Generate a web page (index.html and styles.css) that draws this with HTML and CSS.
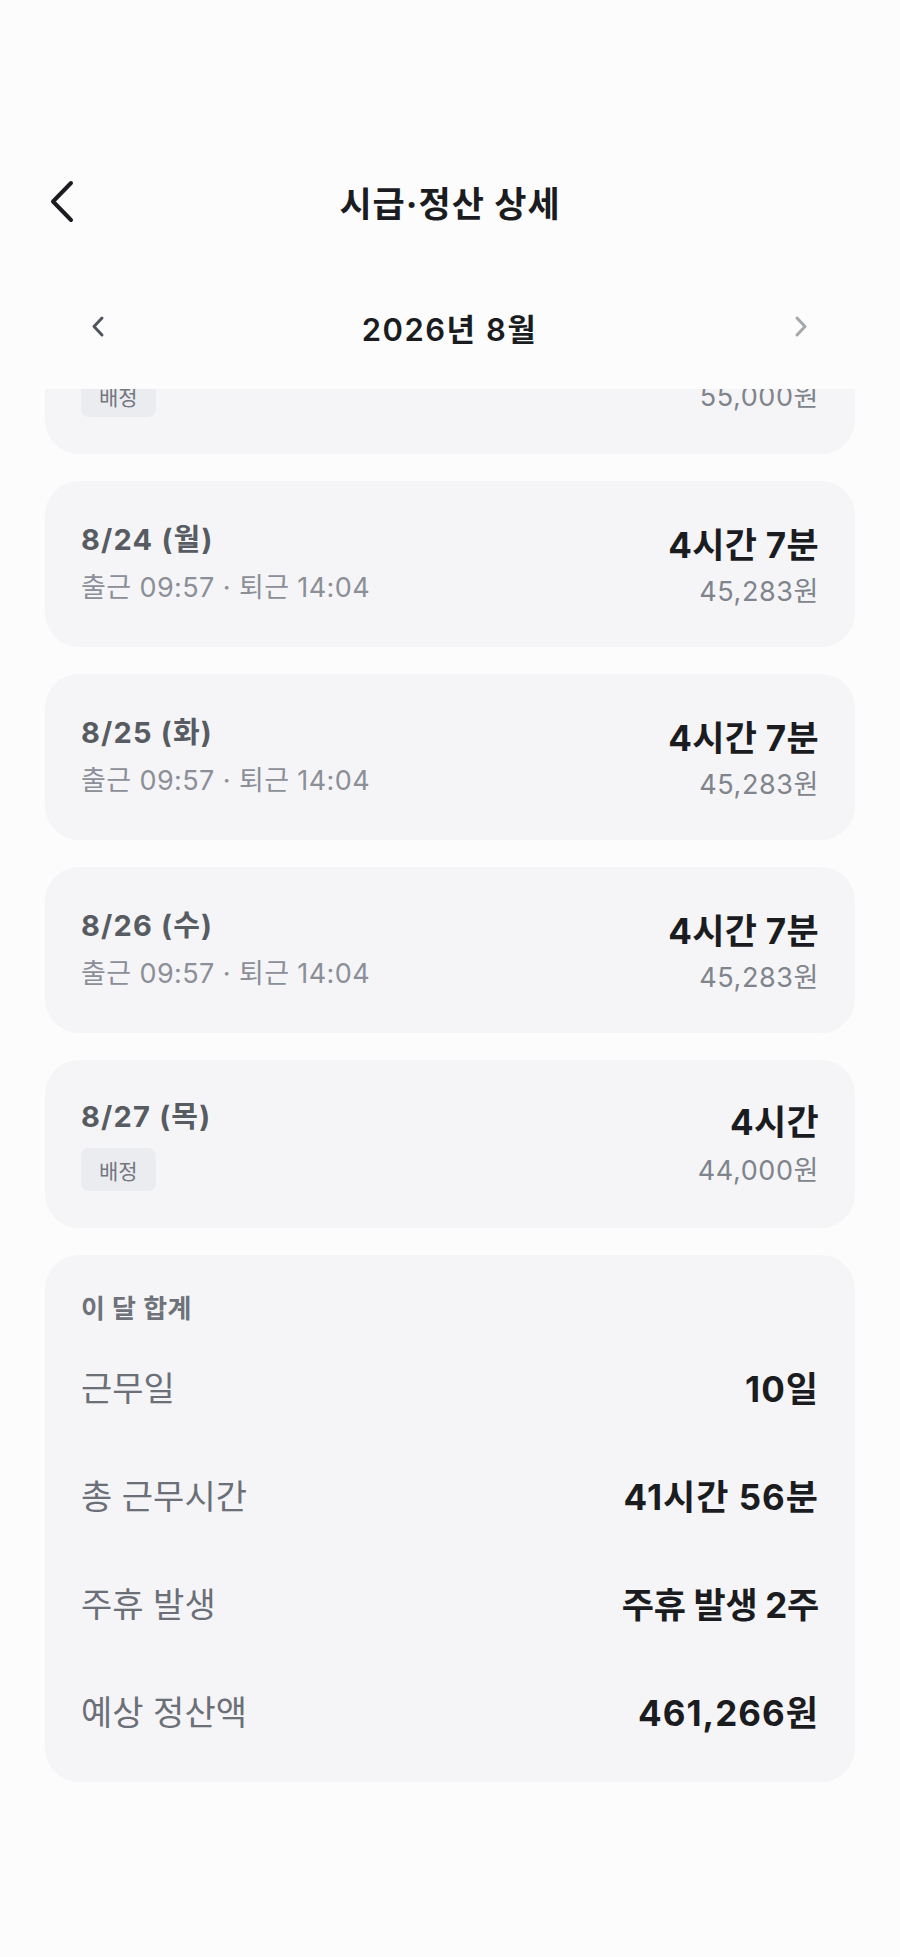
FILE: index.html
```html
<!DOCTYPE html>
<html lang="ko">
<head>
    <meta charset="UTF-8">
    <meta name="viewport" content="width=device-width, initial-scale=1.0">
    <title>시급·정산 상세</title>
    <link rel="stylesheet" href="styles.css">
</head>
<body>
    <div class="page">
        <header class="appbar">
            <button class="back-btn" aria-label="뒤로">
                <svg width="26" height="45" viewBox="0 0 26 45">
                    <path d="M22 4 L4 22.5 L22 41" fill="none" stroke="#1b1c1f" stroke-width="4" stroke-linecap="round" stroke-linejoin="round"/>
                </svg>
            </button>
            <h1 class="title">시급·정산 상세</h1>
            <div></div>
        </header>

        <div class="month-nav">
            <button class="month-btn" aria-label="이전 달">
                <svg width="16" height="26" viewBox="0 0 16 26">
                    <path d="M12 4 L4 12.5 L12 21" fill="none" stroke="#50545c" stroke-width="3" stroke-linecap="round" stroke-linejoin="round"/>
                </svg>
            </button>
            <div class="month-label">2026년 8월</div>
            <button class="month-btn" aria-label="다음 달">
                <svg width="16" height="26" viewBox="0 0 16 26">
                    <path d="M4 4 L12 12.5 L4 21" fill="none" stroke="#a4a7ac" stroke-width="3" stroke-linecap="round" stroke-linejoin="round"/>
                </svg>
            </button>
        </div>

        <div class="scroll-area">
            <div class="day-list">
                <div class="day-card assigned first">
                    <div class="day-left">
                        <div class="day-date">8/23 (일)</div>
                        <span class="badge">배정</span>
                    </div>
                    <div class="day-right">
                        <div class="day-hours">5시간</div>
                        <div class="day-pay">55,000원</div>
                    </div>
                </div>

                <div class="day-card">
                    <div class="day-left">
                        <div class="day-date">8/24 (월)</div>
                        <div class="day-time">출근 09:57 · 퇴근 14:04</div>
                    </div>
                    <div class="day-right">
                        <div class="day-hours">4시간 7분</div>
                        <div class="day-pay">45,283원</div>
                    </div>
                </div>

                <div class="day-card">
                    <div class="day-left">
                        <div class="day-date">8/25 (화)</div>
                        <div class="day-time">출근 09:57 · 퇴근 14:04</div>
                    </div>
                    <div class="day-right">
                        <div class="day-hours">4시간 7분</div>
                        <div class="day-pay">45,283원</div>
                    </div>
                </div>

                <div class="day-card">
                    <div class="day-left">
                        <div class="day-date">8/26 (수)</div>
                        <div class="day-time">출근 09:57 · 퇴근 14:04</div>
                    </div>
                    <div class="day-right">
                        <div class="day-hours">4시간 7분</div>
                        <div class="day-pay">45,283원</div>
                    </div>
                </div>

                <div class="day-card assigned">
                    <div class="day-left">
                        <div class="day-date">8/27 (목)</div>
                        <span class="badge">배정</span>
                    </div>
                    <div class="day-right">
                        <div class="day-hours">4시간</div>
                        <div class="day-pay">44,000원</div>
                    </div>
                </div>

                <div class="summary-card">
                    <div class="summary-title">이 달 합계</div>
                    <div class="summary-row">
                        <span class="summary-label">근무일</span>
                        <span class="summary-value">10일</span>
                    </div>
                    <div class="summary-row">
                        <span class="summary-label">총 근무시간</span>
                        <span class="summary-value">41시간 56분</span>
                    </div>
                    <div class="summary-row">
                        <span class="summary-label">주휴 발생</span>
                        <span class="summary-value text">주휴 발생 2주</span>
                    </div>
                    <div class="summary-row">
                        <span class="summary-label">예상 정산액</span>
                        <span class="summary-value">461,266원</span>
                    </div>
                </div>
            </div>
        </div>
    </div>
</body>
</html>
```

FILE: styles.css
```css
* {
    box-sizing: border-box;
}
body {
    margin: 0;
    background: #fcfcfc;
    font-family: Inter, "Noto Sans CJK KR", sans-serif;
    color: #1b1c1f;
}
button {
    background: none;
    border: none;
    padding: 0;
    cursor: pointer;
    display: flex;
}
.page {
    width: 900px;
    height: 1957px;
    padding-top: 146px;
    display: flex;
    flex-direction: column;
    overflow: hidden;
}
.appbar {
    height: 110px;
    display: grid;
    grid-template-columns: 1fr auto 1fr;
    align-items: center;
}
.back-btn {
    margin-left: 49px;
}
.title {
    margin: 0;
    font-size: 35px;
    font-weight: 700;
    letter-spacing: 1px;
    color: #1b1c1f;
}
.month-nav {
    height: 70px;
    margin: 36px 0 27px;
    padding: 0 91px 0 90px;
    display: flex;
    align-items: center;
    justify-content: space-between;
}
.month-label {
    font-size: 31px;
    font-weight: 600;
    letter-spacing: 1.5px;
    color: #1b1c1f;
}
.scroll-area {
    flex: 1;
    overflow: hidden;
}
.day-list {
    margin: 0 45px;
    display: flex;
    flex-direction: column;
    gap: 27px;
}
.day-card {
    background: #f5f5f7;
    border-radius: 34px;
    padding: 41px 36px 37px;
    display: flex;
    justify-content: space-between;
    align-items: flex-start;
}
.day-card.assigned {
    padding-top: 39px;
}
.day-card.first {
    margin-top: -103px;
}
.day-left {
    display: flex;
    flex-direction: column;
    align-items: flex-start;
    gap: 12px;
}
.day-date {
    font-size: 29px;
    line-height: 36px;
    font-weight: 700;
    letter-spacing: 1.2px;
    color: #575b62;
}
.day-time {
    font-size: 27px;
    line-height: 36px;
    letter-spacing: 0.4px;
    color: #8b8f97;
}
.badge {
    height: 43px;
    margin-top: 1px;
    padding: 0 18px;
    display: flex;
    align-items: center;
    background: #ebecef;
    border-radius: 8px;
    font-size: 21px;
    color: #73777f;
}
.day-right {
    display: flex;
    flex-direction: column;
    align-items: flex-end;
    gap: 6px;
}
.assigned .day-right {
    gap: 8px;
}
.day-hours {
    font-size: 35px;
    line-height: 46px;
    font-weight: 700;
    letter-spacing: 0.3px;
    color: #1b1c1f;
}
.day-pay {
    font-size: 27px;
    line-height: 36px;
    letter-spacing: 0.6px;
    color: #80848c;
}
.summary-card {
    background: #f5f5f7;
    border-radius: 34px;
    padding: 36px 36px 50px;
    display: flex;
    flex-direction: column;
}
.summary-title {
    font-size: 26px;
    line-height: 36px;
    font-weight: 700;
    letter-spacing: 0.5px;
    color: #6e727a;
    margin-bottom: 37px;
}
.summary-row {
    height: 44px;
    display: flex;
    justify-content: space-between;
    align-items: center;
}
.summary-row + .summary-row {
    margin-top: 64px;
}
.summary-label {
    font-size: 34px;
    color: #6b6f78;
}
.summary-value {
    font-size: 35px;
    font-weight: 700;
    letter-spacing: 1px;
    color: #1b1c1f;
}
.summary-value.text {
    letter-spacing: -0.3px;
}
```
